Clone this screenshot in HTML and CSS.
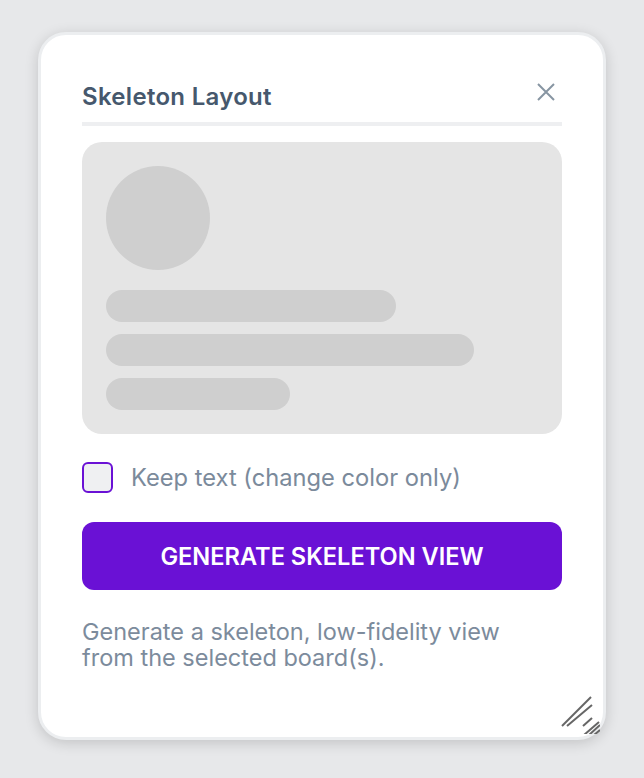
FILE: index.html
```html
<!DOCTYPE html>
<html lang="en">
<head>
<meta charset="utf-8">
<title>Skeleton Layout</title>
<link rel="stylesheet" href="styles.css">
</head>
<body>
<div class="card">
  <div class="header">
    <h1 class="title">Skeleton Layout</h1>
    <svg class="close" width="18" height="18" viewBox="0 0 18 18" aria-label="Close">
      <path d="M1 1 L17 17 M17 1 L1 17" stroke="#8795a2" stroke-width="2" stroke-linecap="butt" fill="none"/>
    </svg>
  </div>
  <div class="preview">
    <div class="avatar"></div>
    <div class="bar bar-1"></div>
    <div class="bar bar-2"></div>
    <div class="bar bar-3"></div>
  </div>
  <label class="option">
    <span class="checkbox"></span>
    <span class="option-text">Keep text (change color only)</span>
  </label>
  <button class="generate">GENERATE SKELETON VIEW</button>
  <p class="desc">Generate a skeleton, low-fidelity view<br>from the selected board(s).</p>
  <svg class="grip" width="40" height="42" viewBox="0 0 40 42">
    <g stroke="#666" stroke-width="2" fill="none">
      <path d="M2 34 L31 5"/>
      <path d="M7 34 L32 13"/>
      <path d="M23 34 L32 26"/>
      <path d="M24 43 L39 30"/>
      <path d="M29 43 L40 33"/>
      <path d="M34 43 L40 38"/>
    </g>
  </svg>
</div>
</body>
</html>
```
FILE: styles.css
```css
html, body {
  margin: 0;
  padding: 0;
}
body {
  background: #e7e8ea;
  font-family: Inter, "Noto Sans", "Liberation Sans", sans-serif;
  width: 644px;
  height: 778px;
  overflow: hidden;
}
.card {
  position: relative;
  box-sizing: border-box;
  margin: 32px 0 0 38px;
  width: 568px;
  height: 708px;
  background: #fff;
  border: 3px solid #eceef0;
  border-radius: 28px;
  box-shadow: 0 3px 14px rgba(0, 0, 0, 0.16);
  padding: 48px 41px 0;
}
.header {
  display: flex;
  justify-content: space-between;
  align-items: flex-start;
  padding-bottom: 11px;
  border-bottom: 4px solid #eeeff1;
}
.title {
  margin: 0;
  font-size: 24px;
  line-height: 28px;
  font-weight: 600;
  letter-spacing: 0.3px;
  color: #46586d;
}
.close {
  display: block;
  margin-right: 7px;
}
.preview {
  margin-top: 16px;
  background: #e5e5e5;
  border-radius: 20px;
  padding: 24px;
  display: flex;
  flex-direction: column;
  align-items: flex-start;
  gap: 12px;
}
.avatar {
  width: 104px;
  height: 104px;
  border-radius: 50%;
  background: #cfcfcf;
  margin-bottom: 8px;
}
.bar {
  height: 32px;
  border-radius: 16px;
  background: #cfcfcf;
}
.bar-1 { width: 290px; }
.bar-2 { width: 368px; }
.bar-3 { width: 184px; }
.option {
  display: flex;
  align-items: center;
  gap: 18px;
  margin-top: 28px;
}
.checkbox {
  box-sizing: border-box;
  width: 31px;
  height: 31px;
  border: 2px solid #6a11d5;
  border-radius: 6px;
  background: #eff0f2;
}
.option-text {
  font-size: 23.7px;
  line-height: 28px;
  color: #7b8a9b;
}
.generate {
  display: block;
  width: 100%;
  height: 68px;
  margin-top: 29px;
  border: none;
  border-radius: 12px;
  background: #6a11d5;
  color: #fff;
  font-family: inherit;
  font-size: 23.6px;
  font-weight: 600;
}
.desc {
  margin: 29px 0 0;
  font-size: 23.5px;
  line-height: 26px;
  color: #7c8b9c;
}
.grip {
  position: absolute;
  right: 3px;
  bottom: 3px;
}
```
